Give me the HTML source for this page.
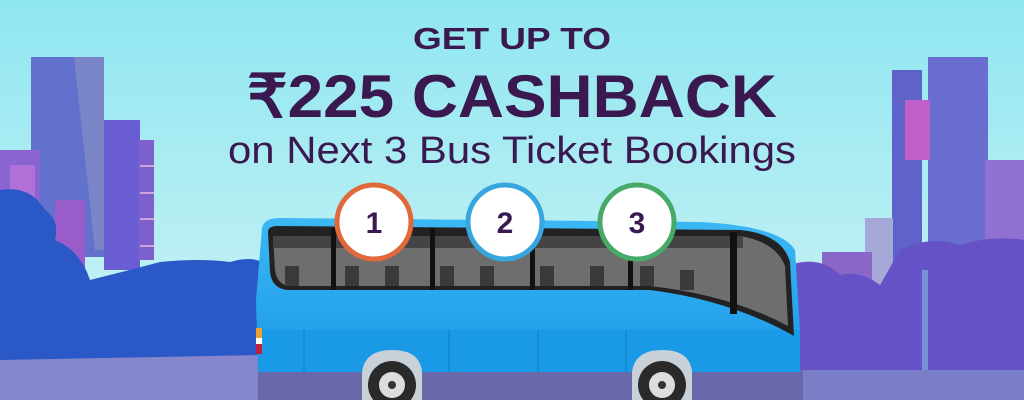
<!DOCTYPE html>
<html><head><meta charset="utf-8"><style>
html,body{margin:0;padding:0;width:1024px;height:400px;overflow:hidden}
svg{display:block}
text{font-family:"Liberation Sans",sans-serif;font-weight:bold;fill:#3a1850}
</style></head><body>
<svg width="1024" height="400" viewBox="0 0 1024 400">
<defs>
<linearGradient id="sky" x1="0" y1="0" x2="0" y2="1">
<stop offset="0" stop-color="#8fe6f0"/><stop offset="1" stop-color="#d2f4f6"/>
</linearGradient>
<linearGradient id="body" x1="0" y1="0" x2="0" y2="1">
<stop offset="0" stop-color="#3cb8f4"/><stop offset="1" stop-color="#1a98e6"/>
</linearGradient>
</defs>
<rect width="1024" height="400" fill="url(#sky)"/>
<rect x="31" y="57" width="73" height="200" fill="#6272cc"/>
<polygon points="74,57 104,57 104,250 95,250" fill="#7a86c8"/>
<rect x="104" y="120" width="36" height="150" fill="#6a5cd2"/>
<rect x="138" y="140" width="16" height="120" fill="#7c60cc"/>
<g fill="#d0a0e0"><rect x="140" y="165" width="14" height="2"/><rect x="140" y="192" width="14" height="2"/><rect x="140" y="218" width="14" height="2"/><rect x="140" y="245" width="14" height="2"/></g>
<rect x="0" y="150" width="40" height="60" fill="#8a64d0"/>
<rect x="10" y="165" width="25" height="40" fill="#b070d8"/>
<rect x="55" y="200" width="30" height="80" fill="#9a5cc8"/>
<path d="M0,190 Q30,185 45,210 Q60,220 55,240 Q80,250 90,280 Q130,270 160,262 Q200,258 230,262 Q250,256 262,262 L262,370 L0,370 Z" fill="#2a58c6"/>
<rect x="892" y="70" width="30" height="200" fill="#5f62c8"/>
<rect x="928" y="57" width="60" height="210" fill="#6a6ed0"/>
<rect x="905" y="100" width="25" height="60" fill="#c060c8"/>
<rect x="985" y="160" width="39" height="100" fill="#9070d0"/>
<rect x="865" y="218" width="28" height="70" fill="#a6a8d8"/>
<rect x="822" y="252" width="50" height="50" fill="#8a66c8"/>
<path d="M790,265 Q820,255 840,275 Q860,270 880,285 L900,250 Q930,235 960,245 Q990,235 1024,240 L1024,372 L790,372 Z" fill="#6552c6"/>
<rect x="922" y="270" width="6" height="100" fill="#7890d8"/>
<path d="M0,360 L262,355 L262,400 L0,400 Z" fill="#8686cc"/>
<rect x="780" y="370" width="244" height="30" fill="#7a7ec6"/>
<rect x="258" y="370" width="545" height="30" fill="#6868aa"/>
<path d="M262,228 Q264,218 280,218 L700,222 Q780,226 795,250 L800,330 L800,372 L258,372 L256,300 Z" fill="url(#body)"/>
<path d="M258,330 L800,330 L800,372 L258,372 Z" fill="#1a9ae6"/>
<path d="M268,232 Q268,226 278,226 L740,230 Q782,234 790,262 L794,336 Q730,300 650,290 L290,290 Q272,290 270,272 Z" fill="#222"/>
<path d="M273,236 L740,236 Q776,242 785,266 L788,326 Q730,295 650,286 L292,286 Q277,286 275,270 Z" fill="#6e6e6e"/>
<rect x="273" y="236" width="470" height="12" fill="#444"/>
<g fill="#111"><rect x="331" y="228" width="5" height="62"/><rect x="430" y="228" width="5" height="62"/><rect x="530" y="230" width="5" height="60"/><rect x="628" y="230" width="5" height="60"/><rect x="730" y="232" width="7" height="82"/></g>
<g fill="#3a3a3a"><rect x="285" y="266" width="14" height="20"/><rect x="345" y="266" width="14" height="20"/><rect x="385" y="266" width="14" height="20"/><rect x="440" y="266" width="14" height="20"/><rect x="480" y="266" width="14" height="20"/><rect x="540" y="266" width="14" height="20"/><rect x="590" y="266" width="14" height="20"/><rect x="640" y="266" width="14" height="20"/><rect x="680" y="270" width="14" height="20"/></g>
<g stroke="#1784cc" stroke-width="1.5"><line x1="304" y1="330" x2="304" y2="372"/><line x1="449" y1="330" x2="449" y2="372"/><line x1="538" y1="330" x2="538" y2="372"/><line x1="626" y1="330" x2="626" y2="372"/></g>
<rect x="256" y="328" width="6" height="10" fill="#f0a030"/><rect x="256" y="338" width="6" height="6" fill="#fff"/><rect x="256" y="344" width="6" height="10" fill="#c02040"/>
<path d="M362,400 L362,372 Q365,350 392,350 Q420,350 422,372 L422,400 Z" fill="#c8d0d8"/>
<circle cx="392" cy="385" r="24" fill="#2a2a2a"/><circle cx="392" cy="385" r="13" fill="#ddd"/><circle cx="392" cy="385" r="4" fill="#333"/>
<path d="M632,400 L632,372 Q635,350 662,350 Q690,350 692,372 L692,400 Z" fill="#c8d0d8"/>
<circle cx="662" cy="385" r="24" fill="#2a2a2a"/><circle cx="662" cy="385" r="13" fill="#ddd"/><circle cx="662" cy="385" r="4" fill="#333"/>
<circle cx="374" cy="222" r="37" fill="#fff" stroke="#e0683a" stroke-width="5"/>
<circle cx="505" cy="222" r="37" fill="#fff" stroke="#38a6de" stroke-width="5"/>
<circle cx="637" cy="222" r="37" fill="#fff" stroke="#48aa68" stroke-width="5"/>
<text x="374" y="233" font-size="30" text-anchor="middle">1</text>
<text x="505" y="233" font-size="30" text-anchor="middle">2</text>
<text x="637" y="233" font-size="30" text-anchor="middle">3</text>
<text x="512" y="49" font-size="31" text-anchor="middle" textLength="198" lengthAdjust="spacingAndGlyphs">GET UP TO</text>
<text x="512" y="117" font-size="60" text-anchor="middle" textLength="530" lengthAdjust="spacingAndGlyphs">₹225 CASHBACK</text>
<text x="512" y="163" font-size="38" text-anchor="middle" style="font-weight:normal" textLength="568" lengthAdjust="spacingAndGlyphs">on Next 3 Bus Ticket Bookings</text>
</svg>
</body></html>
